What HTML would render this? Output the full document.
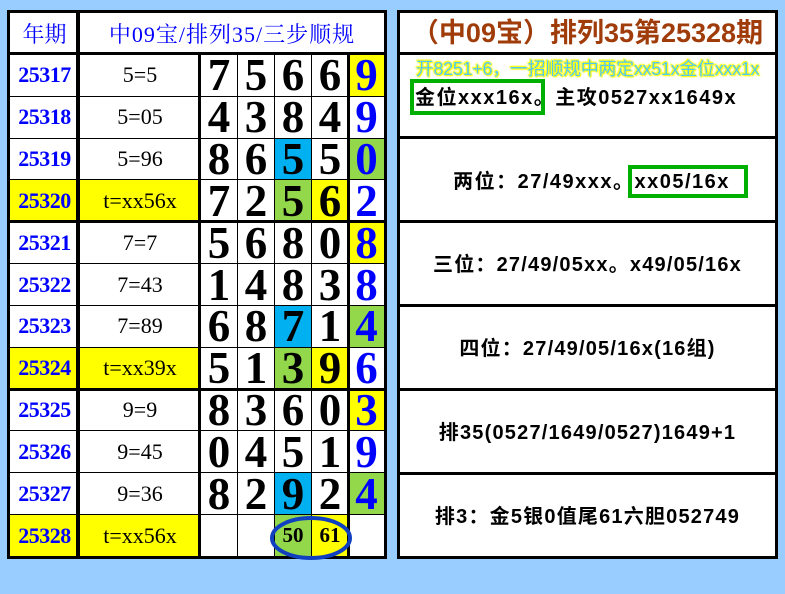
<!DOCTYPE html>
<html><head><meta charset="utf-8"><style>
body{margin:0;width:785px;height:594px;background:#99ccff;position:relative;overflow:hidden}
.a{position:absolute;box-sizing:border-box}
.grid{position:absolute;left:7px;top:10px;width:380px;height:549px;box-sizing:border-box;padding:3px;background:#000;display:grid;gap:1px;grid-template-columns:69px 120px 36px 36px 36px 36px 35px;grid-template-rows:41px repeat(12,1fr)}
.grid div{background:#fff;display:flex;align-items:center;justify-content:center;overflow:hidden}
.h{font-family:"Liberation Serif","Noto Serif CJK SC",serif;color:#0000ff;font-size:22px}
.p{color:#0000ff;font:bold 22px "Liberation Serif",serif;letter-spacing:-0.5px}
.s{font:22px "Liberation Serif",serif}
.d{font:bold 45px "Liberation Serif",serif}
.l{font:bold 45px "Liberation Serif",serif;color:#0000ff}
.grid .y{background:#ffff00}.grid .g{background:#92d84a}.grid .b{background:#00b0f0}
.grid .sm{font:bold 21px "Liberation Serif",serif}
.k{position:absolute;background:#000}
.rt{font-family:"Liberation Sans","Noto Sans CJK SC",sans-serif;font-weight:bold;color:#000;font-size:20px;letter-spacing:1.2px;text-align:center;white-space:nowrap}
</style></head><body>
<div class="grid">
<div class="h">年期</div><div class="h" style="grid-column:2/8;letter-spacing:1px">中09宝/排列35/三步顺规</div>
<div class="p">25317</div><div class="s">5=5</div><div class="d">7</div><div class="d">5</div><div class="d">6</div><div class="d">6</div><div class="l y">9</div>
<div class="p">25318</div><div class="s">5=05</div><div class="d">4</div><div class="d">3</div><div class="d">8</div><div class="d">4</div><div class="l">9</div>
<div class="p">25319</div><div class="s">5=96</div><div class="d">8</div><div class="d">6</div><div class="d b">5</div><div class="d">5</div><div class="l g">0</div>
<div class="p y">25320</div><div class="s y">t=xx56x</div><div class="d">7</div><div class="d">2</div><div class="d g">5</div><div class="d y">6</div><div class="l">2</div>
<div class="p">25321</div><div class="s">7=7</div><div class="d">5</div><div class="d">6</div><div class="d">8</div><div class="d">0</div><div class="l y">8</div>
<div class="p">25322</div><div class="s">7=43</div><div class="d">1</div><div class="d">4</div><div class="d">8</div><div class="d">3</div><div class="l">8</div>
<div class="p">25323</div><div class="s">7=89</div><div class="d">6</div><div class="d">8</div><div class="d b">7</div><div class="d">1</div><div class="l g">4</div>
<div class="p y">25324</div><div class="s y">t=xx39x</div><div class="d">5</div><div class="d">1</div><div class="d g">3</div><div class="d y">9</div><div class="l">6</div>
<div class="p">25325</div><div class="s">9=9</div><div class="d">8</div><div class="d">3</div><div class="d">6</div><div class="d">0</div><div class="l y">3</div>
<div class="p">25326</div><div class="s">9=45</div><div class="d">0</div><div class="d">4</div><div class="d">5</div><div class="d">1</div><div class="l">9</div>
<div class="p">25327</div><div class="s">9=36</div><div class="d">8</div><div class="d">2</div><div class="d b">9</div><div class="d">2</div><div class="l g">4</div>
<div class="p y">25328</div><div class="s y">t=xx56x</div><div></div><div></div><div class="g sm">50</div><div class="y sm">61</div><div></div>
</div>
<div class="k" style="left:76px;top:10px;width:3px;height:549px"></div>
<div class="k" style="left:198px;top:53px;width:3px;height:506px"></div>
<div class="k" style="left:347px;top:53px;width:3px;height:506px"></div>
<div class="k" style="left:7px;top:52px;width:380px;height:3px"></div>
<div class="k" style="left:7px;top:220px;width:380px;height:3px"></div>
<div class="k" style="left:7px;top:388px;width:380px;height:3px"></div>
<svg class="a" style="left:268px;top:514px" width="86" height="48"><ellipse cx="43" cy="24" rx="39" ry="20" fill="none" stroke="#1040c0" stroke-width="4"/></svg>

<div class="a" style="left:397px;top:10px;width:381px;height:549px;background:#fff;border:3px solid #000"></div>
<div class="k" style="left:397px;top:52px;width:381px;height:3px"></div>
<div class="k" style="left:397px;top:136px;width:381px;height:3px"></div>
<div class="k" style="left:397px;top:220px;width:381px;height:3px"></div>
<div class="k" style="left:397px;top:304px;width:381px;height:3px"></div>
<div class="k" style="left:397px;top:388px;width:381px;height:3px"></div>
<div class="k" style="left:397px;top:472px;width:381px;height:3px"></div>
<div class="a rt" style="left:400px;top:14px;width:375px;font-size:27px;letter-spacing:0;color:#a03c0a;line-height:38px">（中09宝）排列35第25328期</div>
<div class="a" style="left:398px;top:55px;width:379px;text-align:center;font:18px 'Liberation Sans','Noto Sans CJK SC',sans-serif;color:#55c8f0;white-space:nowrap;letter-spacing:-0.3px;text-shadow:0 0 2px #ffff00,0 0 2px #ffff00,1px 1px 1px #ffff00,-1px -1px 1px #ffff00">开8251+6，一招顺规中两定xx51x金位xxx1x</div>
<div class="a" style="left:410px;top:79px;width:135px;height:36px;border:4px solid #00b000"></div>
<div class="a rt" style="left:400px;top:84px;width:375px;line-height:28px;text-align:left;padding-left:15px;letter-spacing:1.5px">金位xxx16x。主攻0527xx1649x</div>
<div class="a" style="left:628px;top:165px;width:120px;height:33px;border:4px solid #00b000"></div>
<div class="a rt" style="left:400px;top:167px;width:375px;line-height:30px;padding-left:8px;letter-spacing:1.5px">两位：27/49xxx。xx05/16x</div>
<div class="a rt" style="left:400px;top:250px;width:375px;line-height:30px">三位：27/49/05xx。x49/05/16x</div>
<div class="a rt" style="left:400px;top:334px;width:375px;line-height:30px">四位：27/49/05/16x(16组)</div>
<div class="a rt" style="left:400px;top:418px;width:375px;line-height:30px">排35(0527/1649/0527)1649+1</div>
<div class="a rt" style="left:400px;top:502px;width:375px;line-height:30px">排3：金5银0值尾61六胆052749</div>
</body></html>
